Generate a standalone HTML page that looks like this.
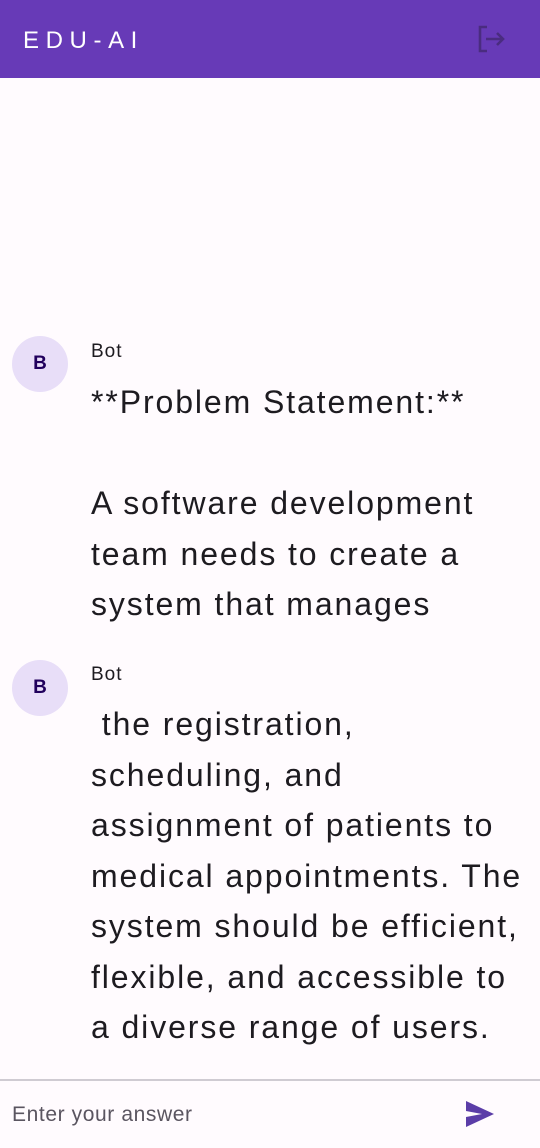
<!DOCTYPE html>
<html><head><meta charset="utf-8"><style>
*{margin:0;padding:0;box-sizing:border-box}
body{width:540px;height:1148px;background:#fffbfe;font-family:"Liberation Sans",sans-serif;position:relative;overflow:hidden;color:#1d1b20}
.hdr{position:absolute;left:0;top:0;width:540px;height:78px;background:#673ab7}
.title{position:absolute;left:23px;top:26px;color:#fff;font-size:24px;letter-spacing:6.6px;line-height:30px}
.av{position:absolute;left:12px;width:56px;height:56px;border-radius:50%;background:#e8def8;color:#21005d;font-size:19px;font-weight:bold;text-align:center;line-height:56px}
.name{position:absolute;left:91px;font-size:19px;line-height:24px;letter-spacing:1px}
.msg{position:absolute;left:91px;font-size:32px;line-height:50.5px;white-space:pre;letter-spacing:1.9px}
.div{position:absolute;left:0;top:1079px;width:540px;height:2px;background:#cfcbd2}
.inp{position:absolute;left:12px;top:1103px;font-size:21px;color:#5a5560;line-height:24px;letter-spacing:0.6px}
</style></head><body>
<div class="hdr"><div class="title">EDU-AI</div>
<svg style="position:absolute;left:476px;top:24px" width="30" height="30" viewBox="0 0 30 30" fill="none" stroke="#4a2c80" stroke-width="2.6"><path d="M11 3H4v24h7"/><path d="M10 15h17M21 9l6 6-6 6"/></svg>
</div>
<div class="av" style="top:336px">B</div>
<div class="name" style="top:340px">Bot</div>
<div class="msg" style="top:377px">**Problem Statement:**

A software development
team needs to create a
system that manages</div>
<div class="av" style="top:660px">B</div>
<div class="name" style="top:663px">Bot</div>
<div class="msg" style="top:699px"> the registration,
scheduling, and
assignment of patients to
medical appointments. The
system should be efficient,
flexible, and accessible to
a diverse range of users.</div>
<div class="div"></div>
<div class="inp">Enter your answer</div>
<svg style="position:absolute;left:465px;top:1100px" width="30" height="28" viewBox="0 0 30 28"><path d="M1 1L29 14 1 27 1 17 17 14 1 11Z" fill="#5b3da8"/></svg>
</body></html>
